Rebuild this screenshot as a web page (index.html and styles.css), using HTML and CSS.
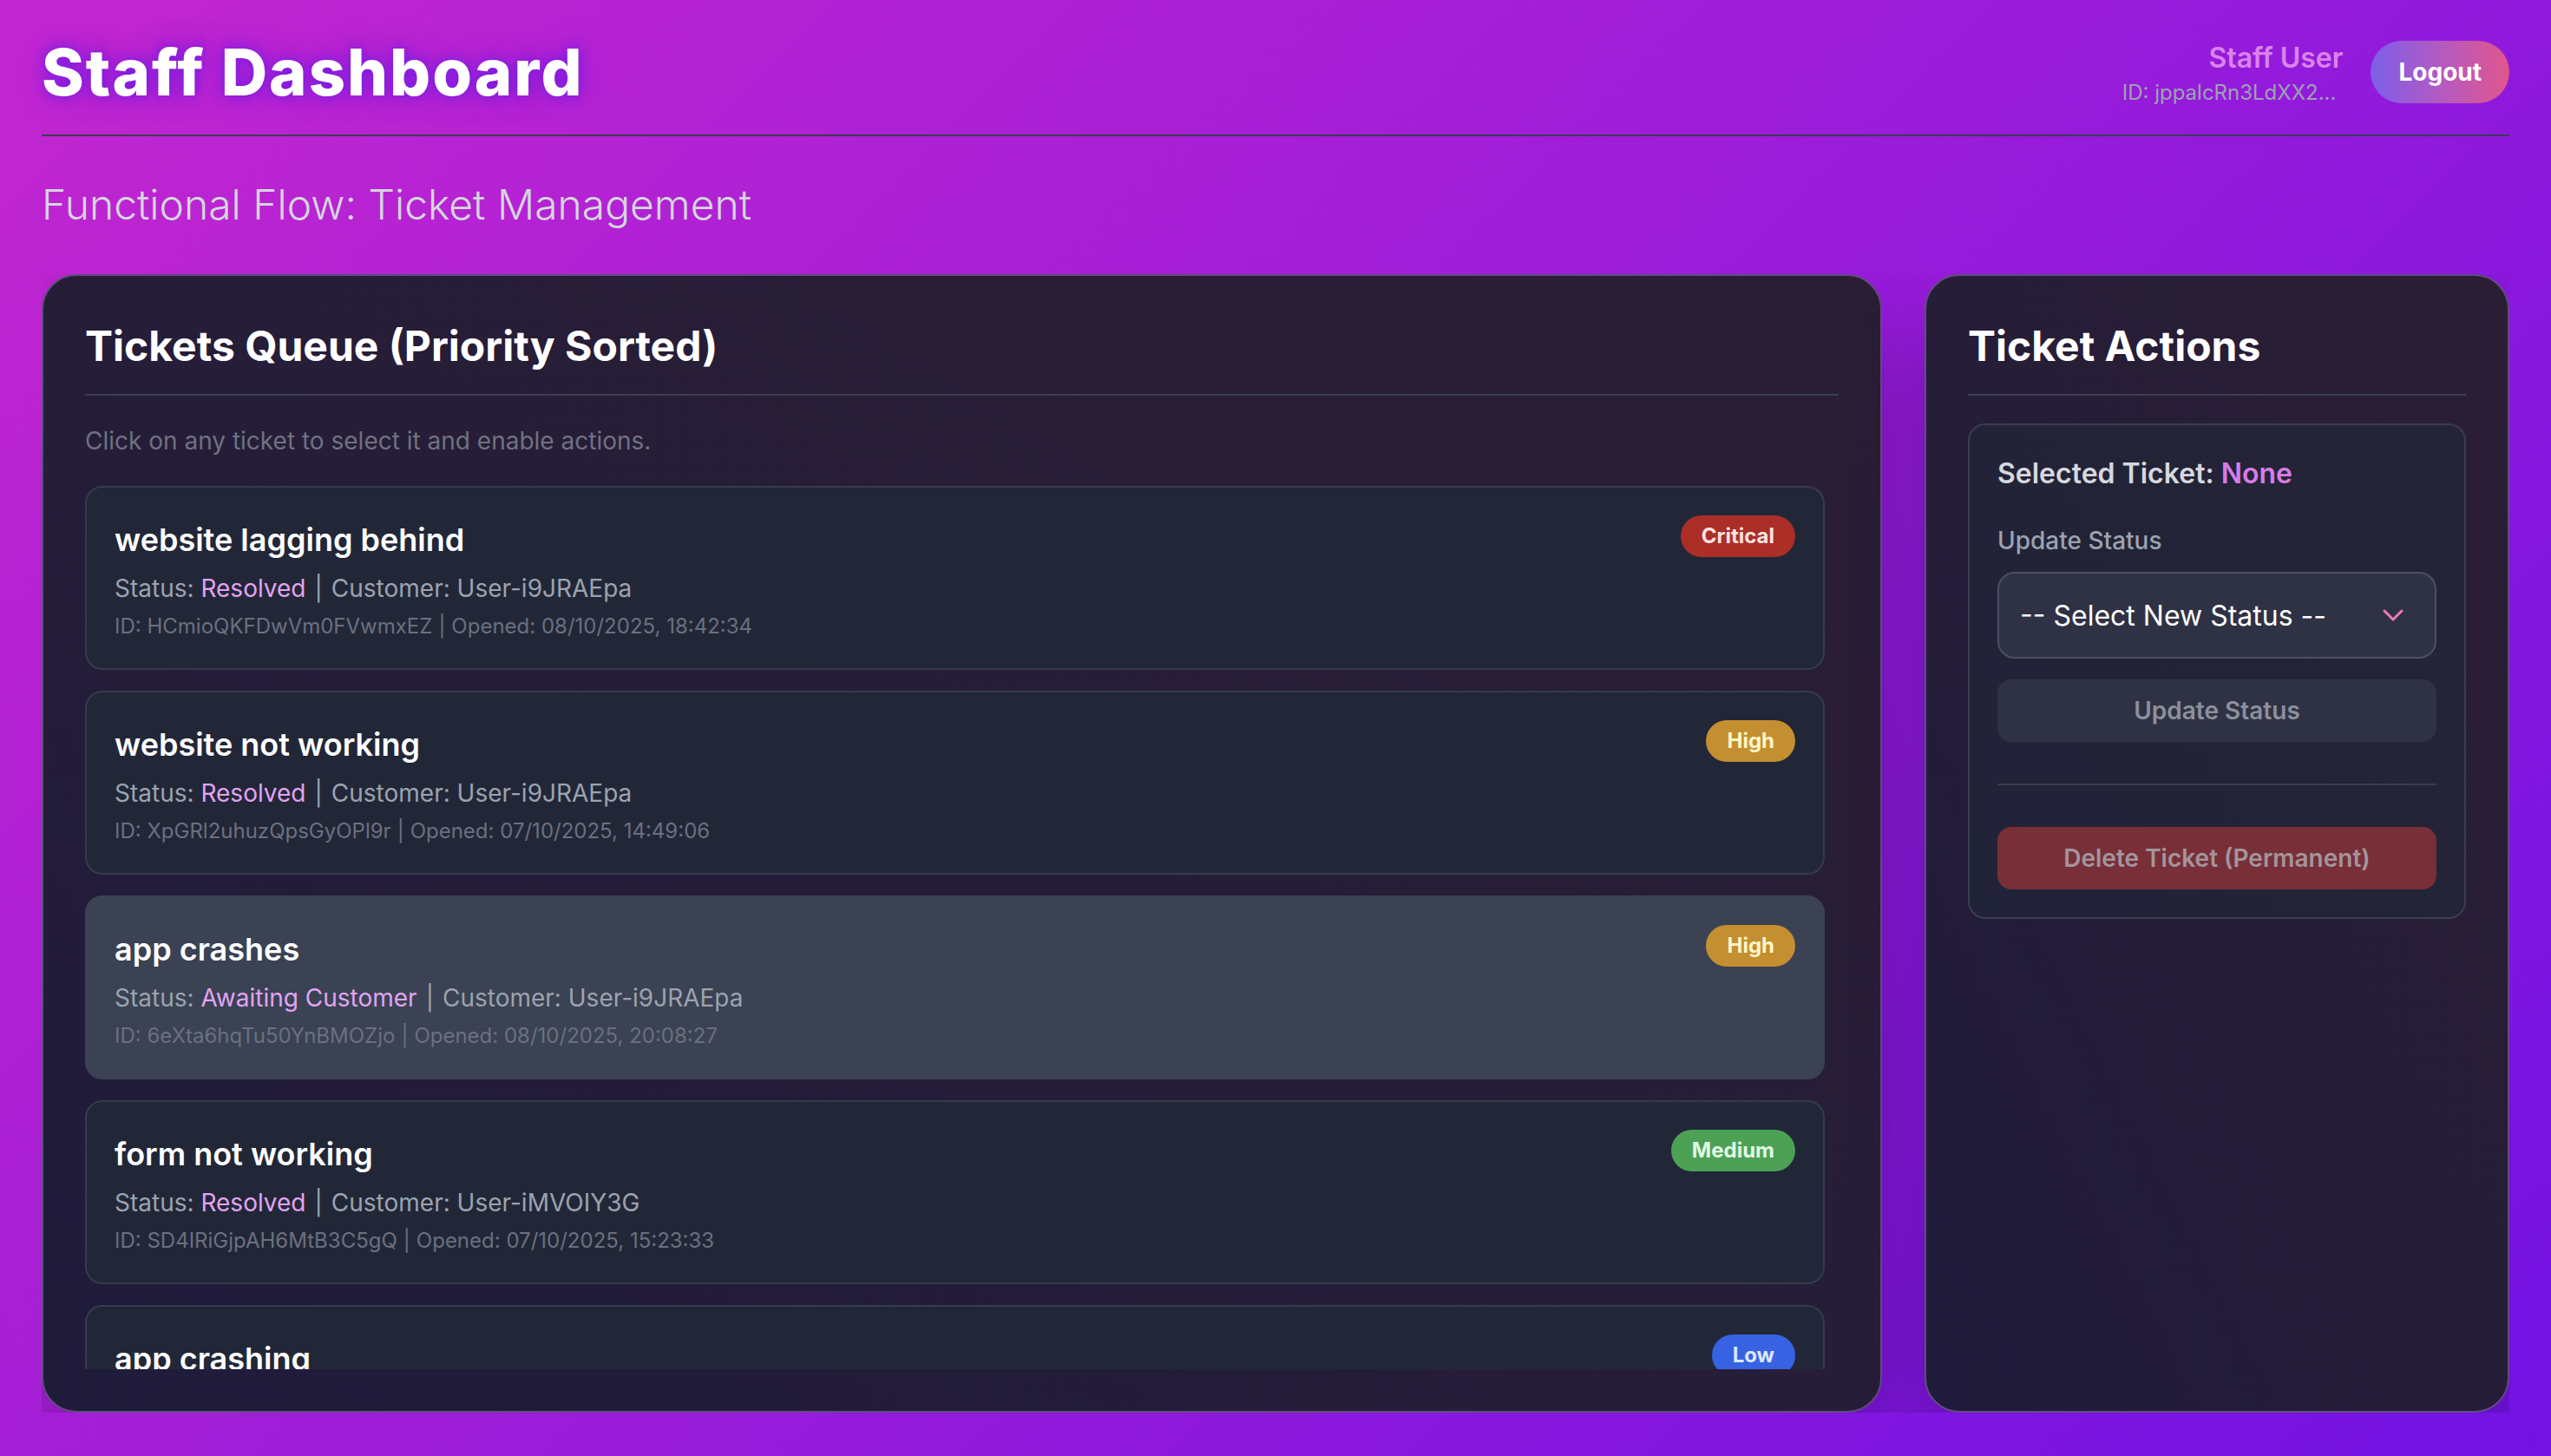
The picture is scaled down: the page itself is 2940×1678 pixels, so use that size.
FILE: index.html
```html
<!DOCTYPE html>
<html lang="en">
<head>
<meta charset="utf-8">
<title>Staff Dashboard</title>
<link rel="stylesheet" href="styles.css">
</head>
<body>
<div class="page">
  <header class="topbar">
    <h1 class="brand">Staff Dashboard</h1>
    <div class="user">
      <div class="user-info">
        <div class="user-name">Staff User</div>
        <div class="user-id">ID: jppalcRn3LdXX2...</div>
      </div>
      <button class="logout" type="button">Logout</button>
    </div>
  </header>

  <h2 class="flow">Functional Flow: Ticket Management</h2>

  <main class="board">
    <section class="panel">
      <h3 class="panel-title">Tickets Queue (Priority Sorted)</h3>
      <p class="hint">Click on any ticket to select it and enable actions.</p>
      <div class="ticket-list">
        <article class="ticket">
          <div class="ticket-body">
            <h4 class="ticket-title">website lagging behind</h4>
            <div class="ticket-meta">Status: <span class="status">Resolved</span><span class="sep">|</span>Customer: User-i9JRAEpa</div>
            <div class="ticket-id">ID: HCmioQKFDwVm0FVwmxEZ<span class="sep">|</span>Opened: 08/10/2025, 18:42:34</div>
          </div>
          <span class="badge badge-critical">Critical</span>
        </article>
        <article class="ticket">
          <div class="ticket-body">
            <h4 class="ticket-title">website not working</h4>
            <div class="ticket-meta">Status: <span class="status">Resolved</span><span class="sep">|</span>Customer: User-i9JRAEpa</div>
            <div class="ticket-id">ID: XpGRl2uhuzQpsGyOPl9r<span class="sep">|</span>Opened: 07/10/2025, 14:49:06</div>
          </div>
          <span class="badge badge-high">High</span>
        </article>
        <article class="ticket ticket-active">
          <div class="ticket-body">
            <h4 class="ticket-title">app crashes</h4>
            <div class="ticket-meta">Status: <span class="status">Awaiting Customer</span><span class="sep">|</span>Customer: User-i9JRAEpa</div>
            <div class="ticket-id">ID: 6eXta6hqTu50YnBMOZjo<span class="sep">|</span>Opened: 08/10/2025, 20:08:27</div>
          </div>
          <span class="badge badge-high">High</span>
        </article>
        <article class="ticket">
          <div class="ticket-body">
            <h4 class="ticket-title">form not working</h4>
            <div class="ticket-meta">Status: <span class="status">Resolved</span><span class="sep">|</span>Customer: User-iMVOIY3G</div>
            <div class="ticket-id">ID: SD4IRiGjpAH6MtB3C5gQ<span class="sep">|</span>Opened: 07/10/2025, 15:23:33</div>
          </div>
          <span class="badge badge-medium">Medium</span>
        </article>
        <article class="ticket">
          <div class="ticket-body">
            <h4 class="ticket-title">app crashing</h4>
            <div class="ticket-meta">Status: <span class="status">Open</span><span class="sep">|</span>Customer: User-iMVOIY3G</div>
            <div class="ticket-id">ID: Qm7TfR2kLw9XbNs4PdYe<span class="sep">|</span>Opened: 06/10/2025, 11:12:05</div>
          </div>
          <span class="badge badge-low">Low</span>
        </article>
      </div>
    </section>

    <aside class="panel">
      <h3 class="panel-title">Ticket Actions</h3>
      <div class="action-box">
        <p class="selected">Selected Ticket: <span class="selected-none">None</span></p>
        <label class="field-label" for="status">Update Status</label>
        <div class="select-wrap">
          <select id="status" class="status-select">
            <option>-- Select New Status --</option>
            <option>Open</option>
            <option>In Progress</option>
            <option>Awaiting Customer</option>
            <option>Resolved</option>
          </select>
          <svg class="chevron" viewBox="0 0 24 14" aria-hidden="true"><polyline points="2,2 12,12 22,2" fill="none" stroke="#ea7cbb" stroke-width="3" stroke-linecap="round" stroke-linejoin="round"/></svg>
        </div>
        <button class="btn btn-update" type="button" disabled>Update Status</button>
        <div class="danger-zone">
          <button class="btn btn-delete" type="button" disabled>Delete Ticket (Permanent)</button>
        </div>
      </div>
    </aside>
  </main>
</div>
</body>
</html>
```

FILE: styles.css
```css
html, body {
  margin: 0;
  height: 100%;
}

body {
  font-family: Inter, "Noto Sans", "Liberation Sans", sans-serif;
  background: linear-gradient(135deg, #c326d0 0%, #7212e3 100%);
  color: #ffffff;
}

.page {
  height: 100vh;
  box-sizing: border-box;
  padding: 43px 48px 50px;
  display: flex;
  flex-direction: column;
}

/* Header */
.topbar {
  display: flex;
  justify-content: space-between;
  align-items: center;
  padding-bottom: 32px;
  border-bottom: 2px solid #3b3c50;
}

.brand {
  margin: 0;
  font-size: 74px;
  line-height: 78px;
  font-weight: 800;
  letter-spacing: 2px;
  color: #ffffff;
  text-shadow: 0 0 14px rgba(112, 28, 228, 0.9), 0 0 30px rgba(112, 28, 228, 0.5);
}

.user {
  display: flex;
  align-items: center;
  gap: 32px;
}

.user-info {
  text-align: right;
}

.user-name {
  font-size: 32px;
  line-height: 48px;
  font-weight: 600;
  color: #d983ea;
}

.user-id {
  font-size: 24px;
  line-height: 32px;
  color: #9ca3af;
  padding-right: 8px;
}

.logout {
  font-family: inherit;
  font-size: 28px;
  line-height: 40px;
  font-weight: 700;
  color: #ffffff;
  border: 0;
  border-radius: 9999px;
  padding: 16px 32px;
  background: linear-gradient(90deg, #7c5fe8 0%, #b45ac2 50%, #e0568c 100%);
}

.flow {
  margin: 47px 0 48px;
  font-size: 48px;
  line-height: 64px;
  font-weight: 300;
  color: #d4d6de;
}

/* Board */
.board {
  flex: 1;
  min-height: 0;
  display: grid;
  grid-template-columns: 1fr 674px;
  gap: 49px;
  overflow: hidden;
}

.panel {
  box-sizing: border-box;
  min-height: 0;
  display: flex;
  flex-direction: column;
  padding: 48px;
  border: 2px solid #604c80;
  border-radius: 40px;
  background: linear-gradient(to top right, #1f1b3b 0%, #261d38 50%, #2b1e34 100%);
  box-shadow: 0 50px 100px -24px rgba(0, 0, 0, 0.4);
}

.panel-title {
  margin: 0 0 32px;
  padding-bottom: 22px;
  border-bottom: 2px solid #3a3e52;
  font-size: 48px;
  line-height: 66px;
  font-weight: 700;
  color: #ffffff;
}

.hint {
  margin: 0 0 32px;
  font-size: 28px;
  line-height: 40px;
  color: #6f7280;
}

.ticket-list {
  flex: 1;
  min-height: 0;
  overflow: hidden;
  padding-right: 16px;
  display: flex;
  flex-direction: column;
  gap: 24px;
}

.ticket {
  flex-shrink: 0;
  display: flex;
  justify-content: space-between;
  align-items: flex-start;
  padding: 32px;
  border: 2px solid #353b4d;
  border-radius: 20px;
  background: #222738;
}

.ticket-active {
  background: #3a4253;
  border-color: #3a4253;
}

.ticket-title {
  margin: 0;
  font-size: 36px;
  line-height: 56px;
  font-weight: 600;
  color: #ffffff;
}

.ticket-meta {
  margin-top: 8px;
  font-size: 28px;
  line-height: 40px;
  color: #9ca3af;
}

.ticket-id {
  margin-top: 8px;
  font-size: 24px;
  line-height: 32px;
  color: #6b7080;
}

.ticket-id .sep {
  margin: 0 7px;
}

.status {
  color: #e1a4f1;
}

.sep {
  margin: 0 10px;
}

.badge {
  font-size: 24px;
  line-height: 32px;
  font-weight: 700;
  padding: 8px 24px;
  border-radius: 9999px;
  white-space: nowrap;
}

.badge-critical { background: #ab2e27; color: #fde2e1; }
.badge-high { background: #c48f30; color: #fef5c8; }
.badge-medium { background: #4ca155; color: #e2fbe6; }
.badge-low { background: #3763e3; color: #dde8fe; }

/* Actions */
.action-box {
  padding: 32px;
  border: 2px solid #393e50;
  border-radius: 20px;
  background: rgba(31, 41, 55, 0.5);
}

.selected {
  margin: 0;
  font-size: 32px;
  line-height: 48px;
  font-weight: 600;
  color: #d6d8df;
}

.selected-none {
  color: #d77ce8;
}

.field-label {
  display: block;
  margin: 33px 0 16px;
  font-size: 28px;
  line-height: 40px;
  font-weight: 500;
  color: #9ca3af;
}

.select-wrap {
  position: relative;
}

.status-select {
  display: block;
  width: 100%;
  height: 100px;
  box-sizing: border-box;
  appearance: none;
  -webkit-appearance: none;
  font-family: inherit;
  font-size: 32px;
  padding: 0 24px;
  border: 2px solid #4a5063;
  border-radius: 20px;
  background: #2f3244;
  color: #ffffff;
}

.chevron {
  position: absolute;
  right: 38px;
  top: 50%;
  width: 24px;
  height: 14px;
  transform: translateY(-50%);
  pointer-events: none;
}

.btn {
  display: block;
  width: 100%;
  font-family: inherit;
  font-size: 28px;
  line-height: 40px;
  font-weight: 600;
  padding: 16px;
  border: 0;
  border-radius: 16px;
}

.btn-update {
  margin-top: 24px;
  background: #2f3244;
  color: #8d909d;
}

.danger-zone {
  margin-top: 48px;
  padding-top: 48px;
  border-top: 2px solid #393e50;
}

.btn-delete {
  background: #792f37;
  color: #a2959c;
}
```
